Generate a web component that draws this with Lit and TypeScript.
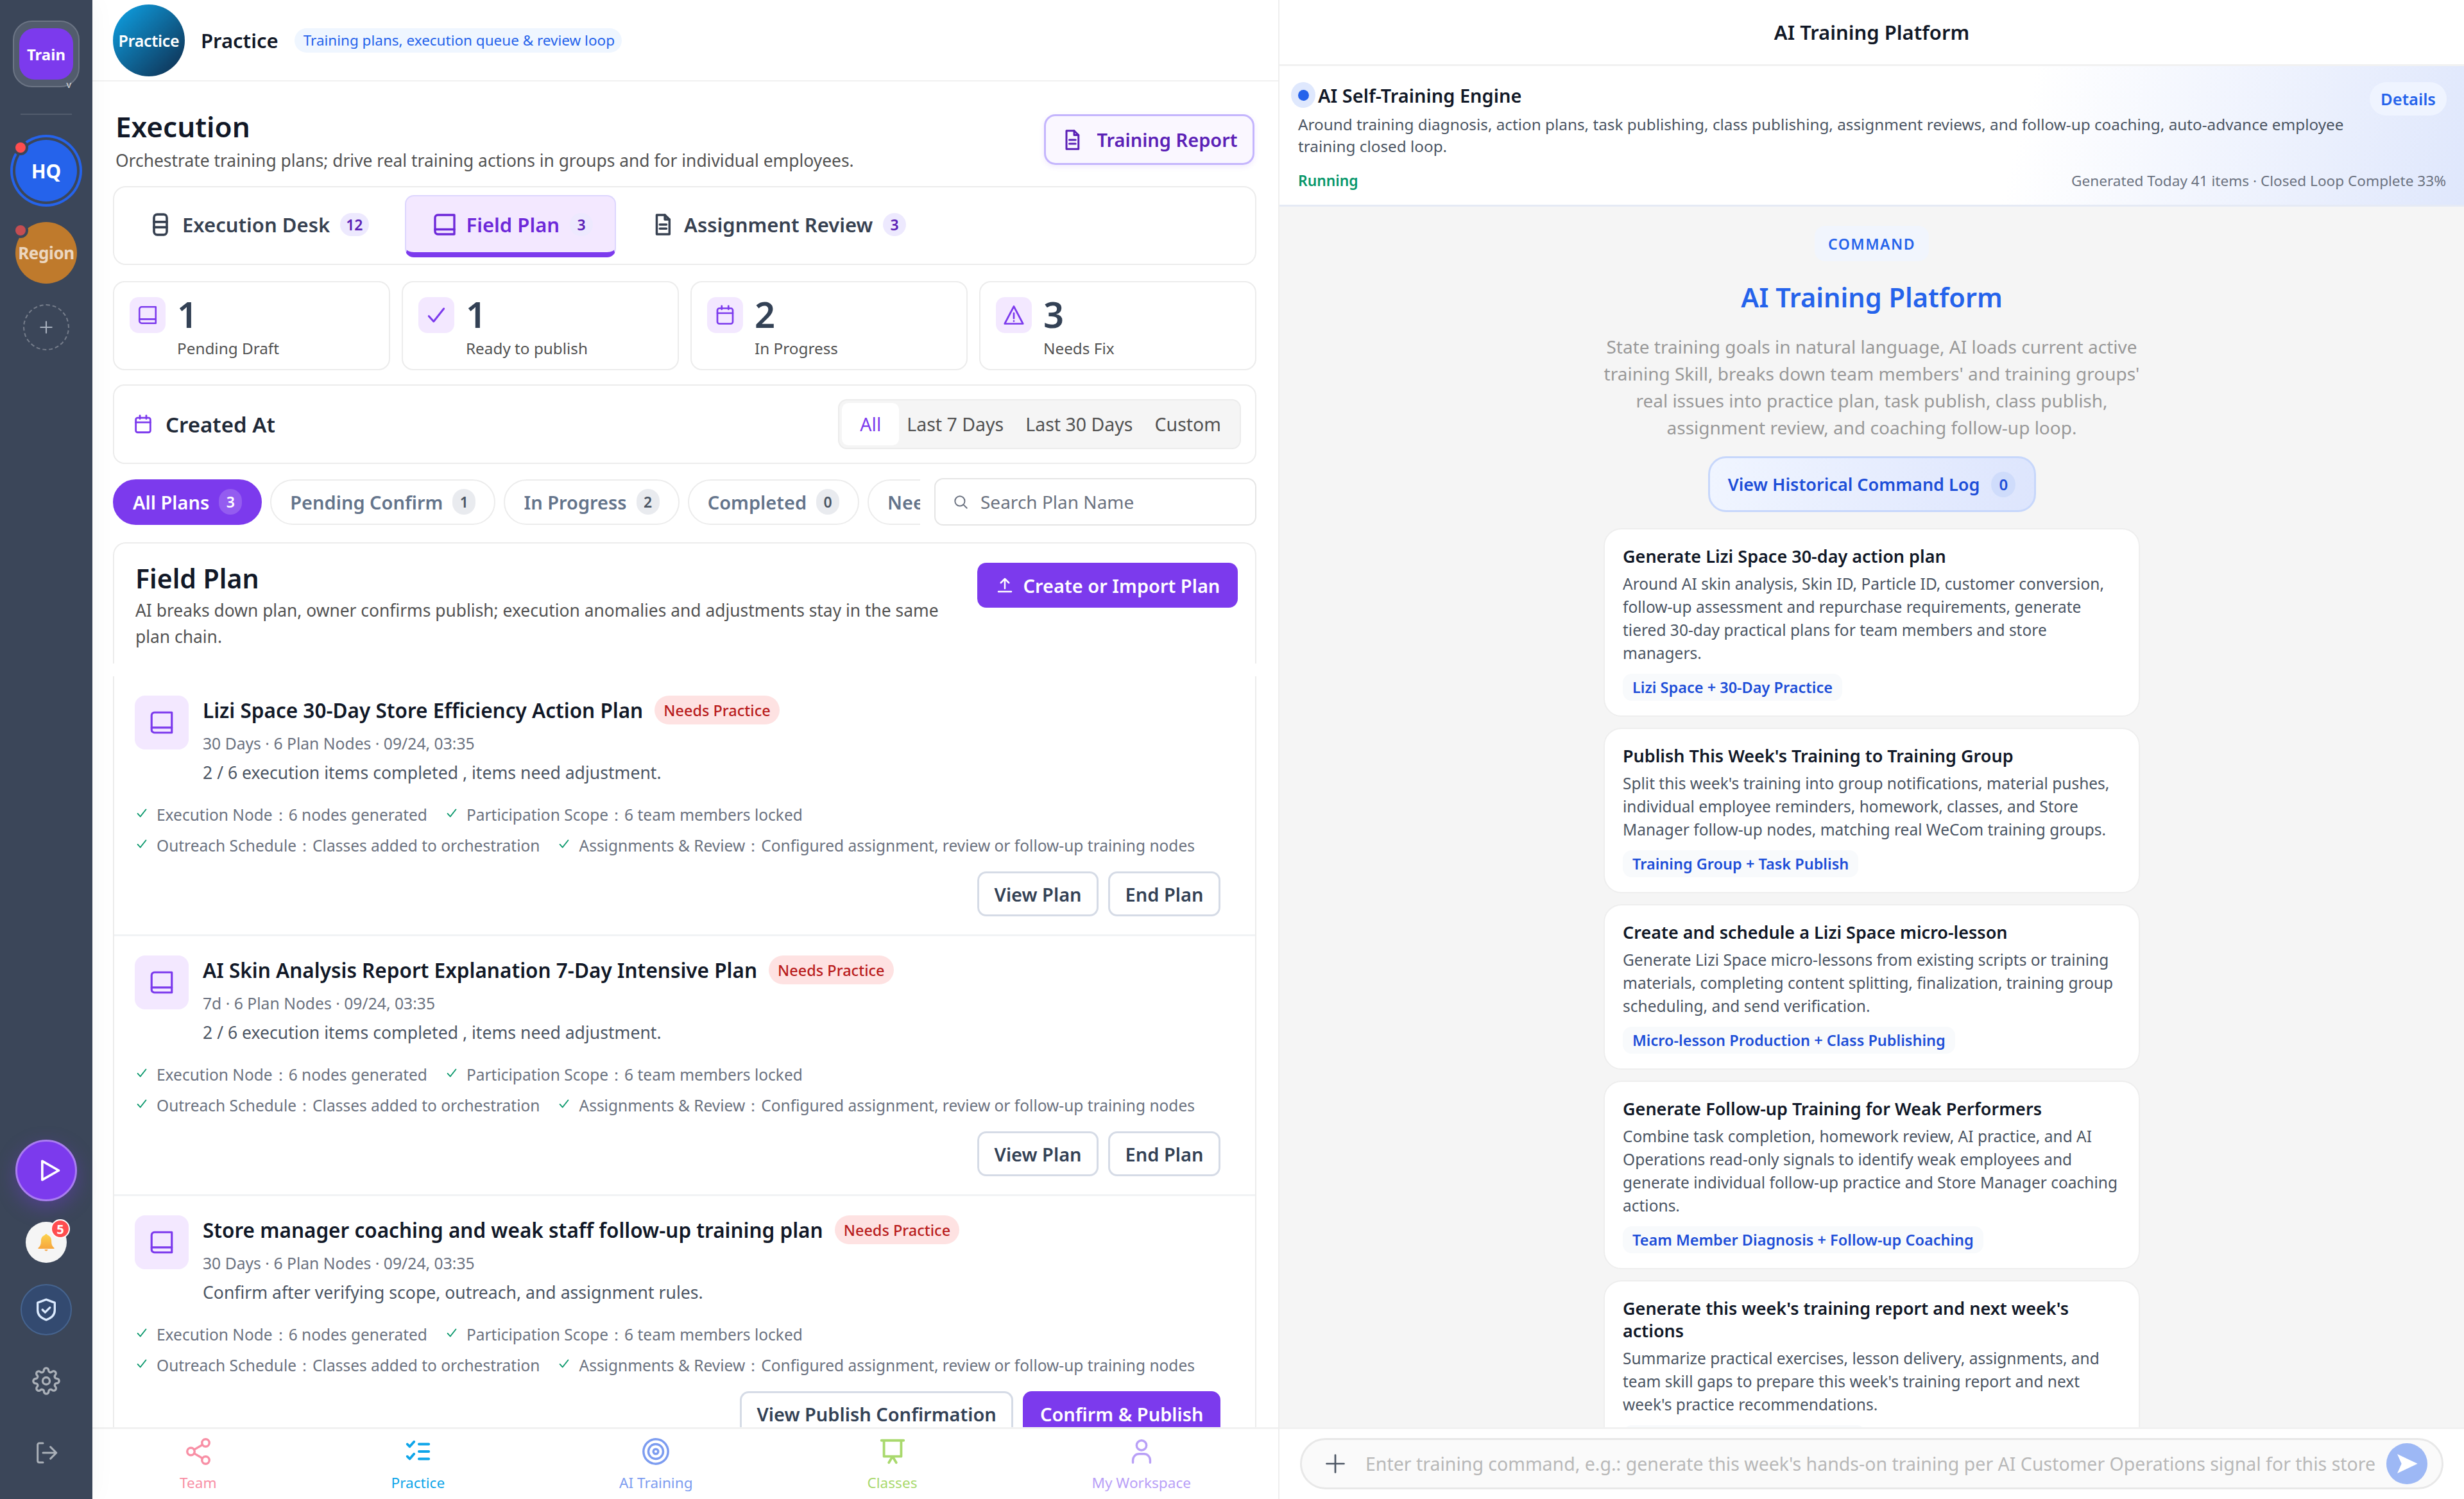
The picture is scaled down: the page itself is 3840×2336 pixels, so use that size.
import { LitElement, html, css, svg } from "lit";
import { customElement } from "lit/decorators.js";

const ic = (body: unknown, size = 32, sw = 2, cls = "") =>
  html`<svg class=${cls} width=${size} height=${size} viewBox="0 0 24 24" fill="none" stroke="currentColor" stroke-width=${sw} stroke-linecap="round" stroke-linejoin="round">${body}</svg>`;

const book = svg`<path d="M3 5.500A2.500 2.500 0 0 1 5.500 3H21v18H5.500A2.500 2.500 0 0 1 3 18.500z"/><path d="M3 16.500h18"/>`;
const doc = svg`<path d="M6 2.500h8l4.500 4.500v14.500H6z"/><path d="M14 2.500V7h4.500"/><path d="M9 12h6.500M9 16h6.500"/>`;
const desk = svg`<rect x="6" y="2.500" width="12" height="19" rx="3"/><path d="M6 9.500h12M6 14.500h12"/>`;
const cal = svg`<rect x="4" y="5" width="16" height="16" rx="2"/><path d="M4 10h16M8.500 2.500V6M15.500 2.500V6"/>`;
const check = svg`<path d="M5 13l4.500 5L19 6"/>`;
const tri = svg`<path d="M12 3L21.500 21h-19z"/><path d="M12 10v5.500M12 18.200v.1"/>`;
const gear = svg`<circle cx="12" cy="12" r="3"/><path d="M19.400 15a1.650 1.650 0 0 0 .33 1.820l.06.06a2 2 0 0 1 0 2.830 2 2 0 0 1-2.830 0l-.06-.06a1.650 1.650 0 0 0-1.820-.33 1.650 1.650 0 0 0-1 1.510V21a2 2 0 0 1-2 2 2 2 0 0 1-2-2v-.09A1.650 1.650 0 0 0 9 19.400a1.650 1.650 0 0 0-1.820.33l-.06.06a2 2 0 0 1-2.830 0 2 2 0 0 1 0-2.830l.06-.06a1.650 1.650 0 0 0 .33-1.820 1.650 1.650 0 0 0-1.510-1H3a2 2 0 0 1-2-2 2 2 0 0 1 2-2h.09A1.650 1.650 0 0 0 4.600 9a1.650 1.650 0 0 0-.33-1.820l-.06-.06a2 2 0 0 1 0-2.830 2 2 0 0 1 2.830 0l.06.06a1.650 1.650 0 0 0 1.820.33H9a1.650 1.650 0 0 0 1-1.510V3a2 2 0 0 1 2-2 2 2 0 0 1 2 2v.09a1.650 1.650 0 0 0 1 1.510 1.650 1.650 0 0 0 1.820-.33l.06-.06a2 2 0 0 1 2.830 0 2 2 0 0 1 0 2.830l-.06.06a1.650 1.650 0 0 0-.33 1.820V9a1.650 1.650 0 0 0 1.510 1H21a2 2 0 0 1 2 2 2 2 0 0 1-2 2h-.09a1.650 1.650 0 0 0-1.510 1z"/>`;

const stats = [
  { n: "1", l: "Pending Draft", i: book, s: 34 },
  { n: "1", l: "Ready to publish", i: check, s: 40 },
  { n: "2", l: "In Progress", i: cal, s: 36 },
  { n: "3", l: "Needs Fix", i: tri, s: 36 },
];
const pills = [
  { t: "All Plans", c: "3", on: true },
  { t: "Pending Confirm", c: "1" },
  { t: "In Progress", c: "2" },
  { t: "Completed", c: "0" },
  { t: "Needs Fix", c: "3" },
];
const plans = [
  { t: "Lizi Space 30-Day Store Efficiency Action Plan", m: "30 Days · 6 Plan Nodes · 09/24, 03:35", d: "2 / 6 execution items completed , items need adjustment.", a: ["View Plan", "End Plan"], p: "" },
  { t: "AI Skin Analysis Report Explanation 7-Day Intensive Plan", m: "7d · 6 Plan Nodes · 09/24, 03:35", d: "2 / 6 execution items completed , items need adjustment.", a: ["View Plan", "End Plan"], p: "" },
  { t: "Store manager coaching and weak staff follow-up training plan", m: "30 Days · 6 Plan Nodes · 09/24, 03:35", d: "Confirm after verifying scope, outreach, and assignment rules.", a: ["View Publish Confirmation"], p: "Confirm & Publish" },
];
const checks = [
  ["Execution Node", "6 nodes generated"],
  ["Participation Scope", "6 team members locked"],
  ["Outreach Schedule", "Classes added to orchestration"],
  ["Assignments & Review", "Configured assignment, review or follow-up training nodes"],
];
const cmds = [
  { t: "Generate Lizi Space 30-day action plan", d: "Around AI skin analysis, Skin ID, Particle ID, customer conversion, follow-up assessment and repurchase requirements, generate tiered 30-day practical plans for team members and store managers.", g: "Lizi Space + 30-Day Practice" },
  { t: "Publish This Week's Training to Training Group", d: "Split this week's training into group notifications, material pushes, individual employee reminders, homework, classes, and Store Manager follow-up nodes, matching real WeCom training groups.", g: "Training Group + Task Publish" },
  { t: "Create and schedule a Lizi Space micro-lesson", d: "Generate Lizi Space micro-lessons from existing scripts or training materials, completing content splitting, finalization, training group scheduling, and send verification.", g: "Micro-lesson Production + Class Publishing" },
  { t: "Generate Follow-up Training for Weak Performers", d: "Combine task completion, homework review, AI practice, and AI Operations read-only signals to identify weak employees and generate individual follow-up practice and Store Manager coaching actions.", g: "Team Member Diagnosis + Follow-up Coaching" },
  { t: "Generate this week's training report and next week's actions", d: "Summarize practical exercises, lesson delivery, assignments, and team skill gaps to prepare this week's training report and next week's practice recommendations.", g: "Training Report + Next Actions" },
];

@customElement("app-root")
export class AppRoot extends LitElement {
  static styles = css`
    :host { display: block; width: 3840px; height: 2336px; overflow: hidden; font-family: "Noto Sans", sans-serif; color: #111827; background: #fff; }
    * { box-sizing: border-box; }
    .app { display: grid; grid-template-columns: 144px 1848px 1848px; height: 2336px; }

    .side { background: #3b4659; display: flex; flex-direction: column; align-items: center; padding-top: 32px; box-shadow: 0 0 40px rgba(0,0,0,.04); position: relative; z-index: 2; }
    .tile { width: 104px; height: 104px; background: #525c6d; border: 2px solid #6c7585; border-radius: 30px; display: flex; align-items: center; justify-content: center; position: relative; flex: none; }
    .tile b { width: 84px; height: 80px; background: #7c3aed; border-radius: 24px; color: #fff; font-size: 24px; font-weight: 700; display: flex; align-items: center; justify-content: center; }
    .tile i { position: absolute; right: 11px; bottom: -5px; color: #ddd; font-size: 15px; font-style: normal; line-height: 16px; }
    .sep { width: 80px; height: 2px; background: rgba(255,255,255,.12); margin: 41px 0 31px; flex: none; }
    .org { position: relative; width: 96px; height: 96px; border-radius: 50%; color: #fff; font-weight: 700; display: flex; align-items: center; justify-content: center; flex: none; }
    .hq { background: #2563eb; font-size: 30px; box-shadow: 0 0 0 4px #3b4659, 0 0 0 8px #2563eb; margin: 8px 0; }
    .region { background: #bf7a2c; font-size: 26px; margin-top: 24px; }
    .region span { opacity: .7; letter-spacing: -.4px; white-space: nowrap; }
    .org .dot { position: absolute; left: 0; top: 4px; width: 16px; height: 16px; border-radius: 50%; background: #ff4d4f; box-shadow: 0 0 0 4px #3b4659; opacity: 1; }
    .region .dot { background: #c44d52; top: 5px; }
    .add { width: 72px; height: 72px; margin-top: 32px; border: 2px dashed rgba(255,255,255,.3); border-radius: 50%; color: #a9b2bf; display: flex; align-items: center; justify-content: center; flex: none; }
    .grow { flex: 1; }
    .play { width: 96px; height: 96px; border-radius: 50%; background: #7c3aed; border: 3px solid #a97df0; box-shadow: 0 10px 30px rgba(124,58,237,.35); color: #fff; display: flex; align-items: center; justify-content: center; flex: none; padding-left: 5px; }
    .bell { position: relative; width: 64px; height: 64px; border-radius: 50%; background: #f5f5f5; margin-top: 32px; display: flex; align-items: center; justify-content: center; flex: none; }
    .bell em { position: absolute; left: 39px; top: -4px; width: 30px; height: 30px; border-radius: 50%; background: #ff4d4f; border: 2px solid #fff; color: #fff; font-size: 20px; font-weight: 700; font-style: normal; display: flex; align-items: center; justify-content: center; }
    .shield { width: 80px; height: 80px; margin-top: 33px; border-radius: 50%; background: #334a70; border: 2px solid #46648f; color: #dbeafe; display: flex; align-items: center; justify-content: center; flex: none; }
    .gear { color: #aab0b8; margin-top: 49px; display: flex; }
    .out { color: #aab0b8; margin: 70px 0 52px; display: flex; }

    .main { display: flex; flex-direction: column; height: 2336px; overflow: hidden; min-width: 0; }
    .top { flex: none; height: 127px; border-bottom: 2px solid #f1f1f1; padding-left: 32px; display: flex; align-items: center; }
    .logo { width: 112px; height: 112px; border-radius: 50%; background: linear-gradient(135deg, #0ea5e9 0%, #0f2a4a 100%); color: #fff; font-size: 25px; font-weight: 600; letter-spacing: -.3px; display: flex; align-items: center; justify-content: center; flex: none; }
    .top h1 { margin: 0 0 0 25px; font-size: 31px; font-weight: 600; }
    .sub { margin-left: 25px; height: 38px; padding: 0 11px 0 14px; border-radius: 19px; background: #eff6ff; color: #2563eb; font-size: 22.500px; display: flex; align-items: center; white-space: nowrap; }
    .body { flex: 1; min-height: 0; overflow: hidden; padding: 0 34px 0 32px; display: flex; flex-direction: column; }
    .head { display: flex; justify-content: space-between; align-items: flex-start; margin-top: 40px; flex: none; padding: 0 3px 0 4px; }
    .head h2 { margin: 0; font-size: 44px; line-height: 60px; font-weight: 600; }
    .head p { margin: 4px 0 0; font-size: 26.400px; line-height: 38px; color: #525252; }
    .report { height: 79px; width: 328px; margin-top: 11px; border: 3px solid #c4b5fd; border-radius: 18px; background: #faf7ff; color: #5b21b6; font-size: 29px; font-weight: 600; display: flex; align-items: center; justify-content: center; gap: 20px; box-shadow: 0 3px 8px rgba(124,58,237,.1); }

    .tabs { flex: none; margin-top: 21px; height: 123px; border: 2px solid #ececec; border-radius: 20px; padding: 12px 0 0 22px; display: flex; gap: 24px; }
    .tab { height: 97px; display: flex; align-items: center; padding: 0 30px 6px 28px; gap: 14px; font-size: 31px; font-weight: 600; color: #374151; border-radius: 14px; border: 2px solid transparent; }
    .tab.on { background: #f3e8ff; color: #6d28d9; border-color: #ddd6fe; border-bottom: 8px solid #7c3aed; padding: 0 34px 0 40px; }
    .tab u { text-decoration: none; min-width: 36px; height: 36px; padding: 0 9px; border-radius: 18px; background: #ede9fe; color: #5b21b6; font-size: 23px; display: flex; align-items: center; justify-content: center; margin-left: 2px; }
    .stats { flex: none; margin-top: 25px; display: grid; grid-template-columns: repeat(4, 1fr); gap: 18px; }
    .stat { height: 139px; border: 2px solid #ececec; border-radius: 18px; padding: 23px 0 0 24px; display: flex; gap: 18px; }
    .ibox { width: 56px; height: 56px; border-radius: 14px; background: #f3e8ff; color: #7c3aed; display: flex; align-items: center; justify-content: center; flex: none; }
    .stat b { display: block; font-size: 56px; line-height: 48px; margin-top: 2px; font-weight: 600; color: #334155; }
    .stat span { display: block; font-size: 24.300px; line-height: 34px; margin-top: 13px; color: #525252; }

    .range { flex: none; margin-top: 22px; height: 124px; border: 2px solid #ececec; border-radius: 18px; display: flex; align-items: center; justify-content: space-between; padding: 0 22px 0 28px; }
    .range .lbl { display: flex; align-items: center; gap: 18px; color: #7c3aed; }
    .range .lbl b { font-size: 33px; font-weight: 600; color: #1f2937; }
    .seg { height: 78px; background: #f5f5f5; border: 2px solid #ececec; border-radius: 14px; display: flex; align-items: center; padding: 0 12px 0 4px; font-size: 28.500px; color: #525252; }
    .seg span { padding: 0 17px; height: 66px; display: flex; align-items: center; }
    .seg .on { background: #fff; color: #7c3aed; border-radius: 10px; padding: 0 28px; margin-right: -5px; }

    .filters { flex: none; margin-top: 22px; display: flex; gap: 22px; align-items: center; }
    .pills { flex: 1; min-width: 0; overflow: hidden; display: flex; gap: 13px; }
    .pill { flex: none; height: 71px; padding: 0 29px; border: 2px solid #ececec; border-radius: 36px; display: flex; align-items: center; gap: 15px; font-size: 29px; font-weight: 600; color: #64748b; }
    .pill u { text-decoration: none; min-width: 36px; height: 40px; border-radius: 20px; background: #e9ebef; color: #4b5563; font-size: 23px; display: flex; align-items: center; justify-content: center; }
    .pill.on { background: #7c3aed; border-color: #7c3aed; color: #fff; }
    .pill.on u { background: #945cf0; color: #fff; }
    .search { flex: none; width: 502px; height: 74px; border: 2px solid #e5e5e5; border-radius: 14px; display: flex; align-items: center; gap: 18px; padding-left: 26px; color: #6b7280; font-size: 28px; }

    .fp { flex: none; margin-top: 26px; height: 189px; border: 2px solid #ececec; border-bottom: 0; border-radius: 20px 20px 0 0; padding: 24px 27px 0 33px; display: flex; justify-content: space-between; }
    .fp h3 { margin: 0; font-size: 41px; line-height: 60px; font-weight: 600; }
    .fp p { margin: 0; width: 1270px; font-size: 26.400px; line-height: 41px; color: #525252; }
    .create { height: 70px; width: 406px; margin-top: 6px; border-radius: 14px; background: #7c3aed; color: #fff; font-size: 29px; font-weight: 600; display: flex; align-items: center; justify-content: center; gap: 14px; flex: none; }
    .list { margin-top: 20px; border-left: 2px solid #ececec; border-right: 2px solid #ececec; flex: 1; min-height: 0; overflow: hidden; }
    .plan { height: 405px; padding: 30px 54px 0 32px; border-bottom: 3px solid #f1f3f5; }
    .row { display: flex; gap: 22px; }
    .pi { width: 84px; height: 84px; border-radius: 16px; background: #f3e8ff; color: #7c3aed; display: flex; align-items: center; justify-content: center; flex: none; }
    .tl { display: flex; align-items: center; gap: 18px; height: 45px; }
    .tl b { font-size: 31.500px; font-weight: 600; white-space: nowrap; }
    .tl i { font-style: normal; height: 45px; padding: 0 14px; border-radius: 23px; background: #fee2e2; color: #b91c1c; font-size: 23.500px; font-weight: 500; display: flex; align-items: center; white-space: nowrap; }
    .meta { font-size: 24.700px; line-height: 36px; margin-top: 12px; color: #6b7280; }
    .desc { font-size: 26.600px; line-height: 40px; margin-top: 7px; color: #4b5563; }
    .checks { display: flex; flex-wrap: wrap; gap: 0 27px; margin-top: 22px; font-size: 24.500px; line-height: 48px; color: #6b7280; }
    .checks div { display: flex; align-items: center; gap: 12px; white-space: nowrap; }
    .checks svg { color: #059669; margin-top: -6px; }
    .acts { display: flex; justify-content: flex-end; gap: 15px; margin-top: 16px; }
    .btn { height: 70px; padding: 0 23.500px; border: 3px solid #d5dbe6; border-radius: 14px; font-size: 29px; font-weight: 600; color: #334155; display: flex; align-items: center; background: #fff; white-space: nowrap; }
    .btn.p { background: #7c3aed; border-color: #7c3aed; color: #fff; }

    .nav { flex: none; height: 112px; border-top: 3px solid #f1f1f1; display: flex; justify-content: space-around; background: #fff; }
    .nav div { display: flex; flex-direction: column; align-items: center; padding-top: 12px; font-size: 22.600px; line-height: 34px; gap: 9px; }

    .right { border-left: 2px solid #eee; display: flex; flex-direction: column; height: 2336px; min-width: 0; overflow: hidden; background: #f5f5f5; }
    .rh { flex: none; height: 103px; background: #fff; border-bottom: 3px solid #f1f1f1; display: flex; align-items: center; justify-content: center; font-size: 31px; font-weight: 600; }
    .eng { flex: none; height: 219px; padding: 25px 28px 0 18px; background: linear-gradient(105deg, #fff 62%, #dfe7fc 100%); border-bottom: 3px solid #e5eaf5; position: relative; }
    .et { display: flex; align-items: center; gap: 4px; font-size: 29px; font-weight: 600; height: 40px; }
    .et i { width: 38px; height: 40px; border-radius: 50%; background: #dfe8fd; display: flex; align-items: center; justify-content: center; }
    .et i::after { content: ""; width: 17px; height: 17px; border-radius: 50%; background: #2563eb; }
    .det { position: absolute; right: 27px; top: 25px; width: 120px; height: 52px; border-radius: 26px; background: #eff4ff; color: #2563eb; font-size: 25.500px; font-weight: 600; display: flex; align-items: center; justify-content: center; }
    .ed { margin: 9px 0 0 11px; width: 1670px; font-size: 24.300px; line-height: 34px; color: #4b5563; }
    .ef { display: flex; justify-content: space-between; margin: 20px 0 0 11px; font-size: 22.600px; line-height: 34px; color: #6b7280; }
    .ef b { color: #059669; font-weight: 600; font-size: 22.800px; }
    .rb { flex: 1; min-height: 0; overflow: hidden; display: flex; flex-direction: column; align-items: center; padding-top: 30px; }
    .kw { height: 55px; width: 178px; border-radius: 16px; background: #f1f5fd; color: #2563eb; font-size: 23px; font-weight: 600; letter-spacing: 1.500px; display: flex; align-items: center; justify-content: center; flex: none; }
    .rb h2 { margin: 24px 0 0; font-size: 41.500px; line-height: 64px; font-weight: 600; color: #2563eb; }
    .rb > p { margin: 24px 0 0; width: 860px; text-align: center; font-size: 28px; line-height: 42px; color: #999; }
    .log { flex: none; margin-top: 24px; width: 511px; height: 87px; border: 3px solid #c7d7fb; border-radius: 28px; background: linear-gradient(100deg, #f0f5ff, #dde5fd); color: #1d4ed8; font-size: 27px; font-weight: 600; display: flex; align-items: center; justify-content: center; gap: 18px; }
    .log u { text-decoration: none; width: 38px; height: 40px; border-radius: 50%; background: #cfdcfb; display: flex; align-items: center; justify-content: center; font-size: 24px; }
    .cards { flex: none; margin-top: 25px; width: 836px; display: flex; flex-direction: column; gap: 17px; }
    .card { background: #fff; border: 2px solid #eee; border-radius: 28px; padding: 24px 28px 23px; }
    .card h4 { margin: 0; font-size: 27px; line-height: 35px; font-weight: 600; }
    .card p { margin: 8px 0 0; font-size: 24.500px; line-height: 36px; color: #4b5563; }
    .card span { display: flex; width: fit-content; align-items: center; height: 42px; margin-top: 14px; padding: 0 15px; border-radius: 14px; background: #f8fafc; color: #1d4ed8; font-size: 23.500px; font-weight: 600; }
    .ibar { flex: none; height: 112px; background: #fff; border-top: 3px solid #f1f1f1; padding: 14px 32px 0 32px; position: relative; }
    .inp { height: 80px; border: 3px solid #e8e8e8; border-radius: 40px; background: #fafafa; display: flex; align-items: center; padding: 0 22px 0 34px; }
    .inp .pl { color: #4b5563; display: flex; }
    .inp span { margin-left: 29px; flex: 1; font-size: 28.500px; color: #b8b8b8; white-space: nowrap; overflow: hidden; }
    .send { width: 64px; height: 64px; border-radius: 50%; background: #9db8f5; color: #fff; display: flex; align-items: center; justify-content: center; flex: none; }
  `;

  render() {
    return html`<div class="app">
      <aside class="side">
        <div class="tile"><b>Train</b><i>v</i></div>
        <div class="sep"></div>
        <div class="org hq"><span class="dot"></span>HQ</div>
        <div class="org region"><span class="dot"></span><span>Region</span></div>
        <div class="add">${ic(svg`<path d="M12 4v16M4 12h16"/>`, 26, 2)}</div>
        <div class="grow"></div>
        <div class="play">${ic(svg`<path d="M7 4l14 8-14 8z"/>`, 44, 2)}</div>
        <div class="bell">
          <svg width="30" height="30" viewBox="0 0 24 24"><defs><linearGradient id="bg" x1="0" y1="0" x2="0" y2="1"><stop offset="0" stop-color="#fcd34d"/><stop offset="1" stop-color="#f59e3b"/></linearGradient></defs><path fill="url(#bg)" d="M12 1.500c1 0 1.600.7 1.600 1.500C17 4 18.500 7 18.500 10.500c0 4 1 6.500 3.500 8.500v1H2v-1c2.500-2 3.500-4.500 3.500-8.500C5.500 7 7 4 10.400 3c0-.8.600-1.500 1.600-1.500zM10 21h4c0 1-1 1.800-2 1.800S10 22 10 21z"/></svg>
          <em>5</em>
        </div>
        <div class="shield">${ic(svg`<path d="M12 2.500l8 3v7c0 4.500-3.500 7.500-8 9-4.500-1.500-8-4.500-8-9v-7z"/><path d="M8.500 12l2.500 2.500 4.500-4.500"/>`, 40, 2)}</div>
        <div class="gear">${ic(gear, 44, 1.800)}</div>
        <div class="out">${ic(svg`<path d="M9 3H5.500A1.500 1.500 0 0 0 4 4.500v15A1.500 1.500 0 0 0 5.500 21H9"/><path d="M9 12h12M16 6.500l5.500 5.500-5.500 5.500"/>`, 40, 1.800)}</div>
      </aside>

      <section class="main">
        <header class="top">
          <div class="logo">Practice</div>
          <h1>Practice</h1>
          <div class="sub">Training plans, execution queue &amp; review loop</div>
        </header>
        <div class="body">
          <div class="head">
            <div><h2>Execution</h2><p>Orchestrate training plans; drive real training actions in groups and for individual employees.</p></div>
            <div class="report">${ic(doc, 36, 2)}Training Report</div>
          </div>
          <div class="tabs">
            <div class="tab">${ic(desk, 40, 2.200)}Execution Desk<u>12</u></div>
            <div class="tab on">${ic(book, 40, 2)}Field Plan<u>3</u></div>
            <div class="tab">${ic(doc, 38, 2.200)}Assignment Review<u>3</u></div>
          </div>
          <div class="stats">
            ${stats.map((s) => html`<div class="stat"><div class="ibox">${ic(s.i, s.s, 1.800)}</div><div><b>${s.n}</b><span>${s.l}</span></div></div>`)}
          </div>
          <div class="range">
            <div class="lbl">${ic(cal, 34, 2)}<b>Created At</b></div>
            <div class="seg"><span class="on">All</span><span>Last 7 Days</span><span>Last 30 Days</span><span>Custom</span></div>
          </div>
          <div class="filters">
            <div class="pills">${pills.map((p) => html`<div class="pill ${p.on ? "on" : ""}">${p.t}<u>${p.c}</u></div>`)}</div>
            <div class="search">${ic(svg`<circle cx="11" cy="11" r="7"/><path d="M16.500 16.500L21 21"/>`, 26, 1.800)}Search Plan Name</div>
          </div>
          <div class="fp">
            <div><h3>Field Plan</h3><p>AI breaks down plan, owner confirms publish; execution anomalies and adjustments stay in the same plan chain.</p></div>
            <div class="create">${ic(svg`<path d="M12 16V4M7 9l5-5 5 5M4 20h16"/>`, 30, 2)}Create or Import Plan</div>
          </div>
          <div class="list">
            ${plans.map((p) => html`<div class="plan">
              <div class="row">
                <div class="pi">${ic(book, 42, 1.800)}</div>
                <div>
                  <div class="tl"><b>${p.t}</b><i>Needs Practice</i></div>
                  <div class="meta">${p.m}</div>
                  <div class="desc">${p.d}</div>
                </div>
              </div>
              <div class="checks">${checks.map((c) => html`<div>${ic(check, 22, 2)}<span>${c[0]}：${c[1]}</span></div>`)}</div>
              <div class="acts">${p.a.map((a) => html`<div class="btn">${a}</div>`)}${p.p ? html`<div class="btn p">${p.p}</div>` : ""}</div>
            </div>`)}
          </div>
        </div>
        <nav class="nav">
          <div style="color:#f88fa5">${ic(svg`<circle cx="18" cy="5" r="3"/><circle cx="6" cy="12" r="3"/><circle cx="18" cy="19" r="3"/><path d="M8.600 13.500l6.800 4M15.400 6.500l-6.800 4"/>`, 46, 1.800)}Team</div>
          <div style="color:#0ea5e9">${ic(svg`<path d="M3.500 6l2 2 3.500-4M3.500 16l2 2 3.500-4M13 6h8M13 12h8M13 18h8"/>`, 46, 2)}Practice</div>
          <div style="color:#7c9cf0">${ic(svg`<circle cx="12" cy="12" r="10"/><circle cx="12" cy="12" r="6"/><circle cx="12" cy="12" r="2"/>`, 46, 1.800)}AI Training</div>
          <div style="color:#a9d96d">${ic(svg`<path d="M3 3h18M5 3v13h14V3M9 21l3-5 3 5"/>`, 46, 2)}Classes</div>
          <div style="color:#b9a0f7">${ic(svg`<circle cx="12" cy="7" r="4"/><path d="M5 21v-2a5 5 0 0 1 5-5h4a5 5 0 0 1 5 5v2"/>`, 46, 1.800)}My Workspace</div>
        </nav>
      </section>

      <section class="right">
        <div class="rh">AI Training Platform</div>
        <div class="eng">
          <div class="et"><i></i>AI Self-Training Engine</div>
          <div class="det">Details</div>
          <div class="ed">Around training diagnosis, action plans, task publishing, class publishing, assignment reviews, and follow-up coaching, auto-advance employee training closed loop.</div>
          <div class="ef"><b>Running</b><span>Generated Today 41 items · Closed Loop Complete 33%</span></div>
        </div>
        <div class="rb">
          <div class="kw">COMMAND</div>
          <h2>AI Training Platform</h2>
          <p>State training goals in natural language, AI loads current active training Skill, breaks down team members' and training groups' real issues into practice plan, task publish, class publish, assignment review, and coaching follow-up loop.</p>
          <div class="log">View Historical Command Log<u>0</u></div>
          <div class="cards">${cmds.map((c) => html`<div class="card"><h4>${c.t}</h4><p>${c.d}</p><span>${c.g}</span></div>`)}</div>
        </div>
        <div class="ibar">
          <div class="inp">
            <div class="pl">${ic(svg`<path d="M12 3v18M3 12h18"/>`, 36, 1.800)}</div>
            <span>Enter training command, e.g.: generate this week's hands-on training per AI Customer Operations signal for this store</span>
            <div class="send"><svg width="40" height="40" viewBox="0 0 24 24" fill="currentColor"><path d="M3 3l19 9-19 9 4-9z"/></svg></div>
          </div>
        </div>
      </section>
    </div>`;
  }
}
